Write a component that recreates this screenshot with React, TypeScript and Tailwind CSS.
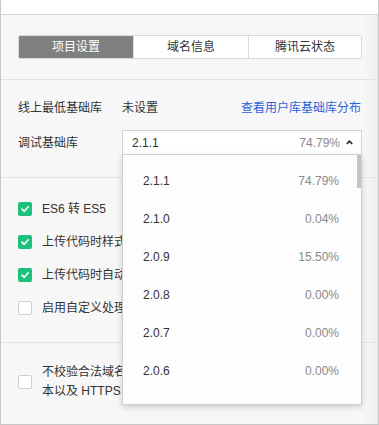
import React from "react";

const font = { fontFamily: '"Liberation Sans", "Noto Sans CJK SC", sans-serif' };

function Check({ on }: { on: boolean }) {
  return on ? (
    <div className="w-[14px] h-[14px] rounded-[2px] bg-[#1cc27b] flex items-center justify-center shrink-0">
      <svg width="10" height="10" viewBox="0 0 10 10">
        <path d="M2 5.2 L4.2 7.3 L8.2 2.8" fill="none" stroke="#fff" strokeWidth="1.6" strokeLinecap="round" strokeLinejoin="round" />
      </svg>
    </div>
  ) : (
    <div className="w-[14px] h-[14px] rounded-[2px] bg-white border border-[#cfcfcf] shrink-0" />
  );
}

const items: [string, string][] = [
  ["2.1.1", "74.79%"],
  ["2.1.0", "0.04%"],
  ["2.0.9", "15.50%"],
  ["2.0.8", "0.00%"],
  ["2.0.7", "0.00%"],
  ["2.0.6", "0.00%"],
  ["2.0.5", "0.00%"],
];

export default function App() {
  return (
    <div style={font} className="w-[379px] h-[425px] overflow-hidden bg-white text-[12px] text-[#333]">
      <div className="h-[425px] border-l border-r border-b border-[#c8c8c8] flex flex-col relative">
        <div className="h-[14px] bg-white shrink-0" />
        <div className="flex-1 border-t border-[#d6d6d6] bg-[#f7f7f7] relative flex flex-col">
          {/* right track */}
          <div className="absolute right-0 top-0 bottom-0 w-[14px] bg-gradient-to-r from-[#f7f7f7] to-[#ededed]" />
          {/* tabs */}
          <div className="h-[64px] shrink-0 pl-[17px] pr-[16px] pt-[20px] relative">
            <div className="flex h-[24px] rounded-[2px] border border-[#d8d8d8] overflow-hidden w-[344px]">
              <div className="w-[114px] bg-[#808080] text-white flex items-center justify-center leading-none">项目设置</div>
              <div className="w-[115px] bg-white border-l border-[#dcdcdc] flex items-center justify-center leading-none">域名信息</div>
              <div className="flex-1 bg-white border-l border-[#dcdcdc] flex items-center justify-center leading-none">腾讯云状态</div>
            </div>
          </div>
          {/* base lib section */}
          <div className="border-t border-[#e2e2e2] pl-[17px] pr-[16px] pt-[18px] h-[98px] shrink-0 relative">
            <div className="flex items-center h-[20px]">
              <span className="w-[104px]">线上最低基础库</span>
              <span>未设置</span>
              <span className="ml-auto text-[#2a62d8]" style={{ marginRight: 1 }}>查看用户库基础库分布</span>
            </div>
            <div className="flex items-center mt-[12px] h-[25px]">
              <span className="w-[104px]">调试基础库</span>
              <div className="w-[240px] h-[25px] bg-white border border-[#d4d4d4] flex items-center pl-[9px] pr-[8px] relative">
                <span>2.1.1</span>
                <span className="ml-auto text-[#8a8a8a]">74.79%</span>
                <svg className="ml-[6px]" width="7" height="5" viewBox="0 0 7 5">
                  <path d="M0.8 4 L3.5 1.2 L6.2 4" fill="none" stroke="#222" strokeWidth="1.6" />
                </svg>
              </div>
            </div>
          </div>
          {/* checkboxes */}
          <div className="border-t border-[#e2e2e2] pl-[17px] pt-[21px] h-[165px] shrink-0 flex flex-col gap-[13px] relative">
            {[
              ["ES6 转 ES5", true],
              ["上传代码时样式自动补全", true],
              ["上传代码时自动压缩", true],
              ["启用自定义处理命令", false],
            ].map(([t, on]) => (
              <div key={t as string} className="flex items-center h-[20px] gap-[10px]">
                <Check on={on as boolean} />
                <span className="whitespace-nowrap">{t as string}</span>
              </div>
            ))}
          </div>
          <div className="border-t border-[#e2e2e2] pl-[17px] pt-[20px] flex items-center gap-[10px] relative">
            <Check on={false} />
            <div className="leading-[19px] w-[300px]">
              不校验合法域名、web-view（业务域名）、TLS 版<br />本以及 HTTPS 证书
            </div>
          </div>
        </div>
        {/* dropdown */}
        <div className="absolute left-[121px] top-[154px] w-[240px] h-[251px] bg-[#fdfdfd] border border-[#d0d0d0] shadow-[0_2px_6px_rgba(0,0,0,0.18)] overflow-hidden">
          <div className="absolute right-0 top-0 w-[4px] h-[33px] bg-[#c4c4c4]" />
          <div className="pt-[7px]">
            {items.map(([v, p]) => (
              <div key={v} className="h-[38px] flex items-center pl-[20px] pr-[22px]">
                <span>{v}</span>
                <span className="ml-auto text-[#8a8a8a]">{p}</span>
              </div>
            ))}
          </div>
        </div>
      </div>
    </div>
  );
}
